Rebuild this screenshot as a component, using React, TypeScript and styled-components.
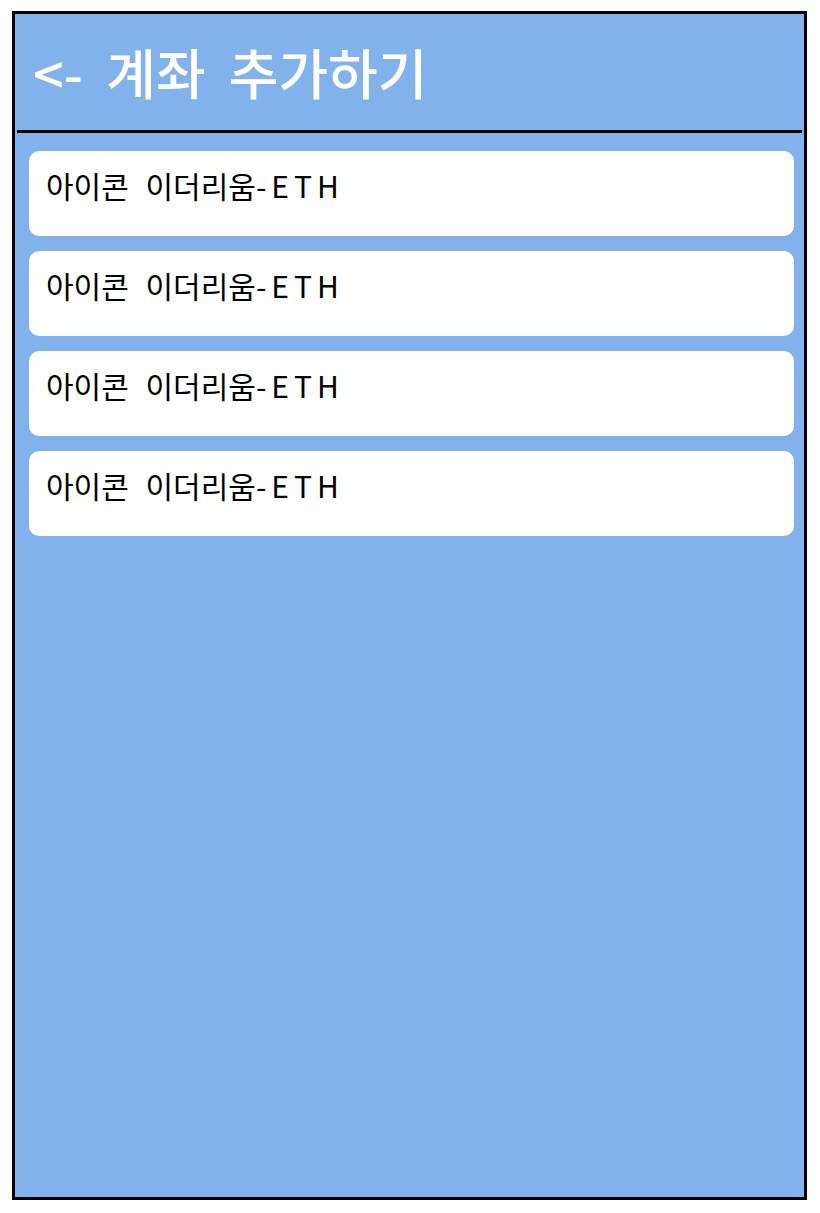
import React from "react";
import styled, { createGlobalStyle } from "styled-components";

const GlobalStyle = createGlobalStyle`
  html, body {
    margin: 0;
    padding: 0;
    background: #ffffff;
  }
  body {
    font-family: "Noto Sans CJK KR", "Noto Sans", sans-serif;
  }
`;

const Frame = styled.div`
  box-sizing: border-box;
  width: 795px;
  height: 1189px;
  margin: 11px 0 0 12px;
  border: 3px solid #000;
  background: #82b2ec;
  display: flex;
  flex-direction: column;
`;

const Header = styled.header`
  box-sizing: border-box;
  height: 116px;
  padding: 18px 18px 0;
  display: flex;
  align-items: flex-start;
`;

const Title = styled.h1`
  margin: 0;
  font-size: 54px;
  font-weight: 500;
  color: #ffffff;
  line-height: normal;
  word-spacing: 11px;
  white-space: nowrap;
`;

const Divider = styled.div`
  height: 3px;
  margin: 0 2px;
  background: #000;
`;

const List = styled.ul`
  list-style: none;
  margin: 0;
  padding: 18px 10px 0 14px;
  display: flex;
  flex-direction: column;
  gap: 15px;
`;

const Card = styled.li`
  box-sizing: border-box;
  height: 85px;
  padding: 12px 17px 0;
  background: #ffffff;
  border-radius: 10px;
  font-size: 30px;
  font-weight: 400;
  line-height: normal;
  color: #000;
  word-spacing: 10px;
  white-space: nowrap;
`;

const Ticker = styled.span`
  letter-spacing: 5px;
`;

const items = [
  { name: "아이콘 이더리움", ticker: "-ETH" },
  { name: "아이콘 이더리움", ticker: "-ETH" },
  { name: "아이콘 이더리움", ticker: "-ETH" },
  { name: "아이콘 이더리움", ticker: "-ETH" },
];

export default function App() {
  return (
    <>
      <GlobalStyle />
      <Frame>
        <Header>
          <Title>&lt;- 계좌 추가하기</Title>
        </Header>
        <Divider />
        <List>
          {items.map((it, i) => (
            <Card key={i}>
              {it.name}
              <Ticker>{it.ticker}</Ticker>
            </Card>
          ))}
        </List>
      </Frame>
    </>
  );
}
